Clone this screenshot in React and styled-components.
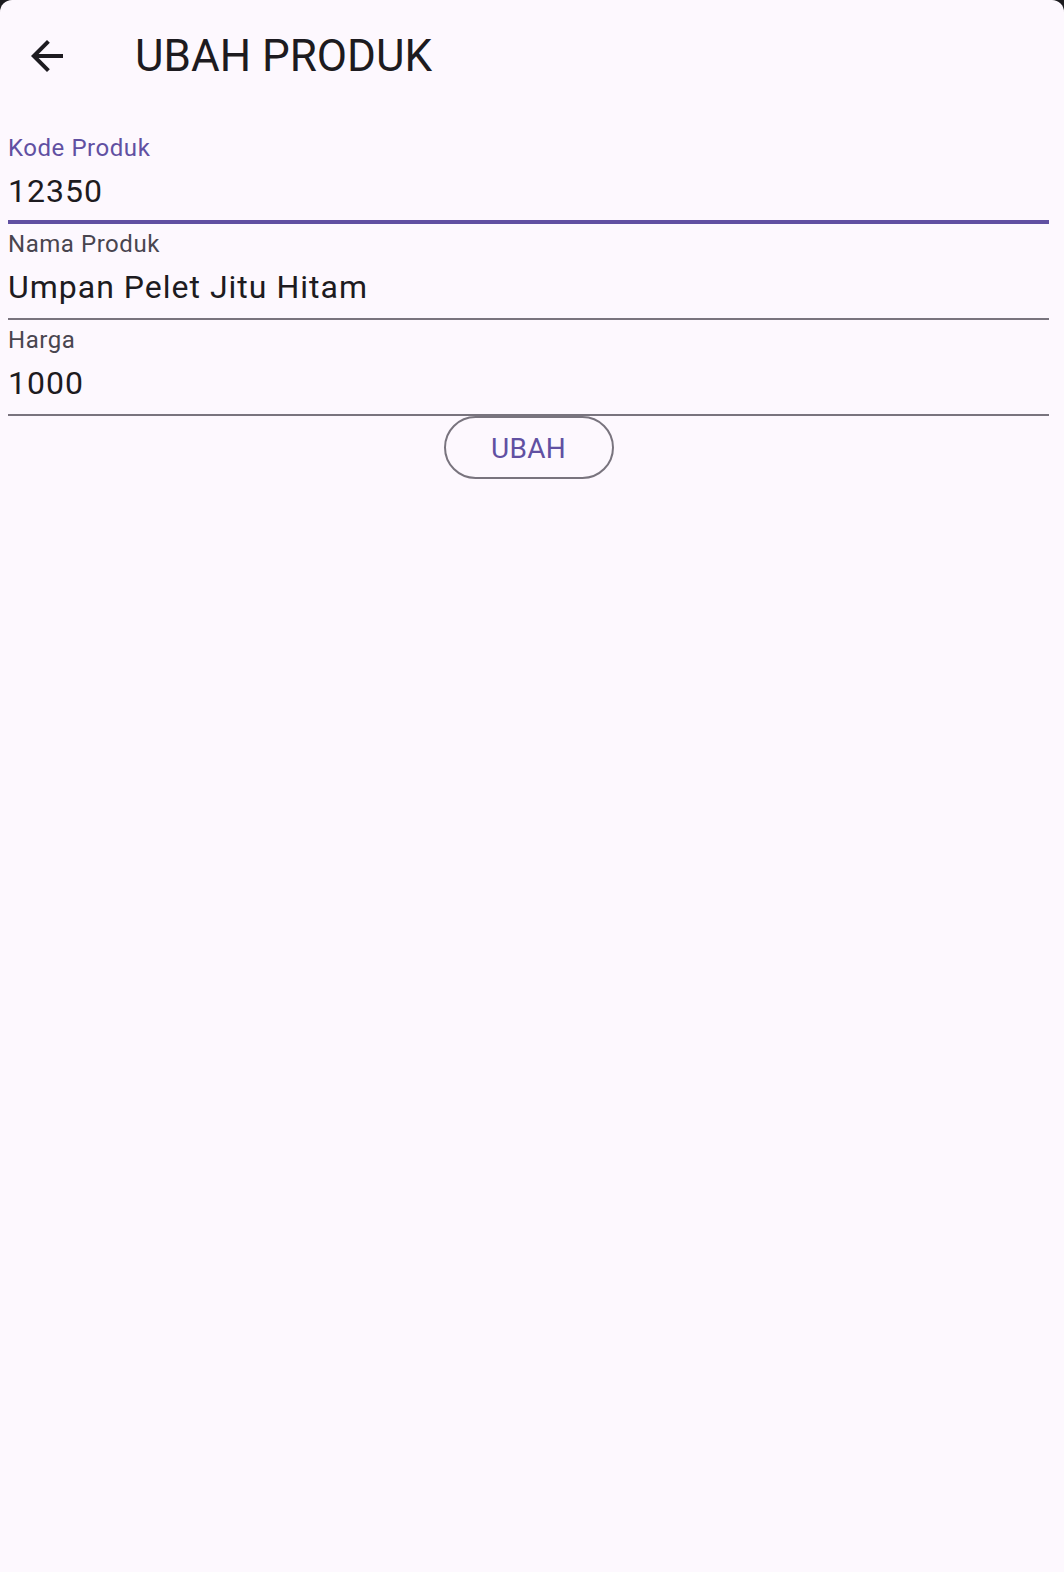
import React from "react";
import styled, { createGlobalStyle } from "styled-components";

const Global = createGlobalStyle`
  html, body { margin: 0; padding: 0; background: #1c1b1f; }
  body { font-family: Roboto, "Noto Sans", sans-serif; }
  * { box-sizing: border-box; }
`;

const Screen = styled.div`
  width: 1064px;
  min-height: 1572px;
  background: #fdf8fe;
  border-radius: 12px 12px 0 0;
  display: flex;
  flex-direction: column;
`;

const AppBar = styled.header`
  height: 112px;
  display: flex;
  align-items: center;
  padding-left: 23px;
`;

const BackButton = styled.button`
  width: 48px;
  height: 48px;
  padding: 0;
  border: none;
  background: none;
  display: flex;
  align-items: center;
  justify-content: center;
  color: #1d1b20;
  cursor: pointer;
`;

const Title = styled.h1`
  margin: 0 0 0 64px;
  font-family: Roboto, sans-serif;
  font-weight: 400;
  font-size: 44px;
  line-height: 52px;
  color: #1d1b20;
`;

const Form = styled.form`
  display: flex;
  flex-direction: column;
  padding: 16px 15px 0 8px;
`;

const Field = styled.label`
  display: flex;
  flex-direction: column;
  height: 96px;
  padding-top: 6px;
  border-bottom: ${(p) => (p.$focused ? "4px solid #6150a2" : "2px solid #79747e")};
`;

const Label = styled.span`
  font-size: 24px;
  line-height: 28px;
  letter-spacing: 0.55px;
  color: ${(p) => (p.$focused ? "#6150a2" : "#49454f")};
`;

const Value = styled.span`
  margin-top: 10px;
  font-size: 32px;
  line-height: 38px;
  letter-spacing: 1px;
  color: #1d1b20;
`;

const ButtonRow = styled.div`
  display: flex;
  justify-content: center;
`;

const OutlinedButton = styled.button`
  width: 170px;
  height: 63px;
  border: 2px solid #79747e;
  border-radius: 32px;
  background: transparent;
  font-family: Roboto, sans-serif;
  font-size: 28px;
  font-weight: 400;
  color: #6150a2;
  letter-spacing: 0.3px;
  padding-top: 2px;
`;

const ArrowBack = () => (
  <svg width="48" height="48" viewBox="0 0 24 24" fill="currentColor">
    <path d="M20 11H7.83l5.59-5.59L12 4l-8 8 8 8 1.41-1.41L7.83 13H20v-2z" />
  </svg>
);

const fields = [
  { label: "Kode Produk", value: "12350", focused: true },
  { label: "Nama Produk", value: "Umpan Pelet Jitu Hitam" },
  { label: "Harga", value: "1000" },
];

export default function App() {
  return (
    <>
      <Global />
      <Screen>
        <AppBar>
          <BackButton aria-label="Kembali">
            <ArrowBack />
          </BackButton>
          <Title>UBAH PRODUK</Title>
        </AppBar>
        <Form onSubmit={(e) => e.preventDefault()}>
          {fields.map((f) => (
            <Field key={f.label} $focused={f.focused}>
              <Label $focused={f.focused}>{f.label}</Label>
              <Value>{f.value}</Value>
            </Field>
          ))}
          <ButtonRow>
            <OutlinedButton type="submit">UBAH</OutlinedButton>
          </ButtonRow>
        </Form>
      </Screen>
    </>
  );
}
